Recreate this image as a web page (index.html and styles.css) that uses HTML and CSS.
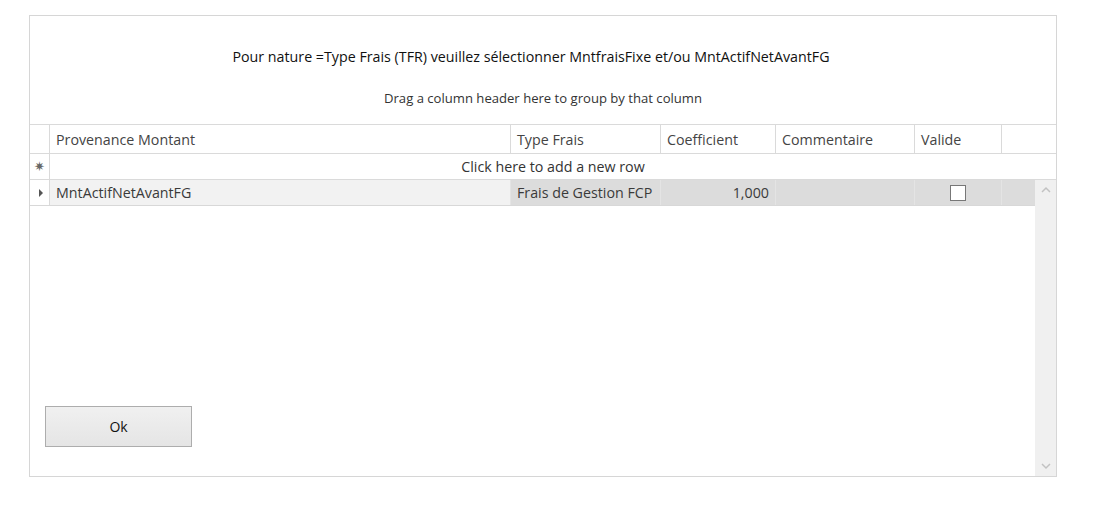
FILE: index.html
```html
<!DOCTYPE html>
<html lang="fr">
<head>
    <meta charset="utf-8">
    <title>Type Frais</title>
    <link rel="stylesheet" href="styles.css">
</head>
<body>
<div class="frame">
    <div class="top">
        <p class="title">Pour nature =Type Frais (TFR) veuillez sélectionner MntfraisFixe et/ou MntActifNetAvantFG</p>
        <p class="group-hint">Drag a column header here to group by that column</p>
    </div>
    <div class="grid">
        <div class="row head">
            <div class="cell ind"></div>
            <div class="cell c-prov">Provenance Montant</div>
            <div class="cell c-type">Type Frais</div>
            <div class="cell c-coef">Coefficient</div>
            <div class="cell c-comm">Commentaire</div>
            <div class="cell c-val">Valide</div>
            <div class="cell c-rest"></div>
        </div>
        <div class="row new-row">
            <div class="cell ind"><span class="star">&#x2737;</span></div>
            <div class="cell add">Click here to add a new row</div>
        </div>
        <div class="body">
            <div class="rows">
                <div class="row data">
                    <div class="cell ind"><span class="arrow"></span></div>
                    <div class="cell c-prov light">MntActifNetAvantFG</div>
                    <div class="cell c-type">Frais de Gestion FCP</div>
                    <div class="cell c-coef num">1,000</div>
                    <div class="cell c-comm"></div>
                    <div class="cell c-val center"><span class="check"></span></div>
                    <div class="cell c-fill"></div>
                </div>
                <div class="actions">
                    <button type="button" class="btn">Ok</button>
                </div>
            </div>
            <div class="vscroll">
                <svg width="20" height="20" viewBox="0 0 20 20"><path d="M6 12 L10 8 L14 12" fill="none" stroke="#c2c2c2" stroke-width="1.5"/></svg>
                <svg width="20" height="20" viewBox="0 0 20 20"><path d="M6 8 L10 12 L14 8" fill="none" stroke="#c2c2c2" stroke-width="1.5"/></svg>
            </div>
        </div>
    </div>
</div>
</body>
</html>
```

FILE: styles.css
```css
html, body { margin: 0; padding: 0; background: #fff; }
body {
    padding: 15px 0 0 29px;
    font-family: "Open Sans", "Noto Sans", sans-serif;
    color: #3a3a3a;
}

.frame {
    width: 1026px;
    height: 460px;
    border: 1px solid #d6d6d6;
    display: flex;
    flex-direction: column;
}

.top { height: 108px; text-align: center; }
.top p { margin: 0; }
.title { padding: 31px 24px 0 0; font-size: 14.25px; color: #111; line-height: 20px; }
.group-hint { padding-top: 23px; font-size: 13.1px; color: #333; line-height: 16px; }

.grid { flex: 1; display: flex; flex-direction: column; min-height: 0; }
.row { display: flex; }
.cell {
    box-sizing: border-box;
    border-right: 1px solid #dadada;
    padding: 0 6px;
    white-space: nowrap;
    overflow: hidden;
    font-size: 14.25px;
    display: flex;
    align-items: center;
}
.ind { width: 20px; padding: 0; justify-content: center; }
.c-prov { width: 461px; }
.c-type { width: 150px; }
.c-coef { width: 115px; }
.c-comm { width: 139px; }
.c-val { width: 87px; }
.c-rest { flex: 1; border-right: 0; }
.c-fill { flex: 1; border-right: 0; }

.head {
    height: 30px;
    border-top: 1px solid #dadada;
    border-bottom: 1px solid #dadada;
    box-sizing: border-box;
    color: #444;
}

.new-row { height: 26px; border-bottom: 1px solid #dadada; box-sizing: border-box; }
.add { flex: 1; justify-content: center; border-right: 0; color: #333; }
.star { font-size: 13px; color: #666; font-family: "DejaVu Sans", sans-serif; }

.body { flex: 1; display: flex; min-height: 0; }
.rows { flex: 1; display: flex; flex-direction: column; }

.data {
    height: 26px;
    border-bottom: 1px solid #d8d8d8;
    box-sizing: border-box;
    background: #dcdcdc;
}
.data .cell { border-right-color: #e4e4e4; }
.data .ind { background: #fff; border-right-color: #dadada; }
.data .light { background: #f2f2f2; }
.num { justify-content: flex-end; }
.center { justify-content: center; }
.arrow {
    width: 0; height: 0;
    border-top: 4.5px solid transparent;
    border-bottom: 4.5px solid transparent;
    border-left: 4.5px solid #555;
    margin-left: 2px;
}
.check {
    width: 14px; height: 14px;
    border: 1px solid #777;
    background: #fff;
}

.actions { padding: 200px 0 0 15px; }
.btn {
    width: 147px;
    height: 41px;
    border: 1px solid #adadad;
    background: linear-gradient(#f0f0f0, #e5e5e5);
    font-family: "Open Sans", "Noto Sans", sans-serif;
    font-size: 14px;
    color: #111;
}

.vscroll {
    width: 21px;
    background: #f0f0f0;
    display: flex;
    flex-direction: column;
    justify-content: space-between;
    align-items: center;
}
.vscroll svg { display: block; }
```
